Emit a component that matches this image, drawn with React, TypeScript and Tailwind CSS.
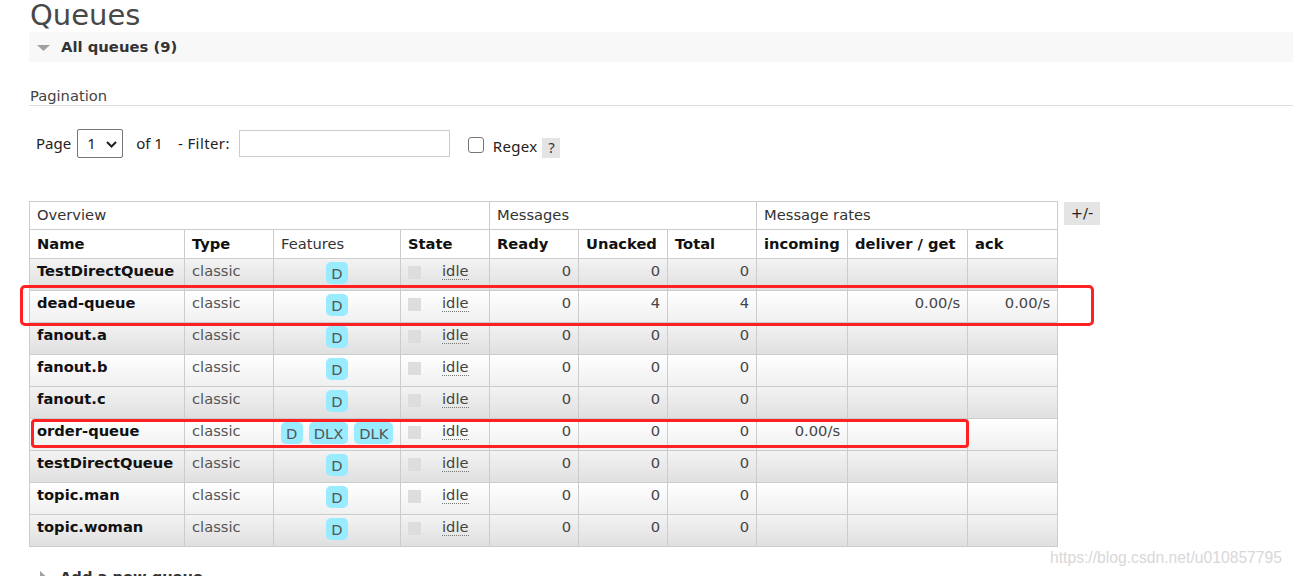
import React from "react";

type Row = {
  name: string;
  feats: string[];
  ready: string;
  unacked: string;
  total: string;
  incoming: string;
  deliver: string;
  ack: string;
};

const rows: Row[] = [
  { name: "TestDirectQueue", feats: ["D"], ready: "0", unacked: "0", total: "0", incoming: "", deliver: "", ack: "" },
  { name: "dead-queue", feats: ["D"], ready: "0", unacked: "4", total: "4", incoming: "", deliver: "0.00/s", ack: "0.00/s" },
  { name: "fanout.a", feats: ["D"], ready: "0", unacked: "0", total: "0", incoming: "", deliver: "", ack: "" },
  { name: "fanout.b", feats: ["D"], ready: "0", unacked: "0", total: "0", incoming: "", deliver: "", ack: "" },
  { name: "fanout.c", feats: ["D"], ready: "0", unacked: "0", total: "0", incoming: "", deliver: "", ack: "" },
  { name: "order-queue", feats: ["D", "DLX", "DLK"], ready: "0", unacked: "0", total: "0", incoming: "0.00/s", deliver: "", ack: "" },
  { name: "testDirectQueue", feats: ["D"], ready: "0", unacked: "0", total: "0", incoming: "", deliver: "", ack: "" },
  { name: "topic.man", feats: ["D"], ready: "0", unacked: "0", total: "0", incoming: "", deliver: "", ack: "" },
  { name: "topic.woman", feats: ["D"], ready: "0", unacked: "0", total: "0", incoming: "", deliver: "", ack: "" },
];

const V = { fontFamily: '"DejaVu Sans", Verdana, sans-serif' };
const S = { fontFamily: '"Noto Sans", "Open Sans", sans-serif' };

export default function App() {
  const td = "border border-[#cccccc] align-top px-[7px] pt-[3px] leading-[18px] h-[32px]";
  const num = td + " text-right text-[#444]";
  return (
    <div className="relative w-[1293px] h-[576px] overflow-hidden bg-white text-[#333]" style={V}>
      <div className="pl-[29px]">
        <h1 className="h-[32px] text-[29px] leading-[31px] pl-[1px] text-[#484848]">Queues</h1>
        <div className="h-[30px] bg-[#f8f8f8] flex items-center pl-[8px]">
          <svg width="13" height="6" viewBox="0 0 13 6" className="mr-[11px] mt-[1px]">
            <polygon points="0,0 13,0 6.5,6" fill="#a0a0a0" />
          </svg>
          <span className="font-bold text-[14.8px] text-[#333]">All queues (9)</span>
        </div>
        <div className="mt-[23px] h-[21px] leading-[21px] text-[14.7px] pl-[1px] border-b border-[#dddddd] text-[#444]">
          Pagination
        </div>
        <div className="mt-[23px] h-[29px] flex items-center text-[15px] text-[#222]" style={S}>
          <span className="ml-[7px]">Page</span>
          <div className="ml-[6px] w-[46px] h-[29px] border border-[#767676] rounded-[2px] flex items-center pl-[9px]">
            <span>1</span>
            <svg width="11" height="7" viewBox="0 0 11 7" className="ml-[10px] mt-[1px]">
              <polyline points="1,1 5.5,5.5 10,1" fill="none" stroke="#222" strokeWidth="2" />
            </svg>
          </div>
          <span className="ml-[13px]">of 1</span>
          <span className="ml-[15px] tracking-[0.4px]">- Filter:</span>
          <div className="ml-[9px] w-[211px] h-[27px] border border-[#cccccc]" />
          <div className="ml-[18px] w-[16px] h-[16px] border border-[#767676] rounded-[3px] mt-[2px]" />
          <span className="ml-[9px] mt-[6px] tracking-[0.3px]">Regex</span>
          <span className="ml-[5px] mt-[8px] w-[18px] h-[20px] bg-[#e4e4e4] flex items-center justify-center text-[#333]">?</span>
        </div>
        <div className="mt-[43px] flex items-start">
          <table className="border-collapse table-fixed w-[1028px] text-[14.7px]">
            <colgroup>
              <col className="w-[155px]" />
              <col className="w-[89px]" />
              <col className="w-[127px]" />
              <col className="w-[89px]" />
              <col className="w-[89px]" />
              <col className="w-[89px]" />
              <col className="w-[89px]" />
              <col className="w-[91px]" />
              <col className="w-[120px]" />
              <col className="w-[90px]" />
            </colgroup>
            <thead>
              <tr className="bg-white text-[#333]">
                <th colSpan={4} className="border border-[#cccccc] h-[28px] px-[7px] text-left font-normal">Overview</th>
                <th colSpan={3} className="border border-[#cccccc] h-[28px] px-[7px] text-left font-normal">Messages</th>
                <th colSpan={3} className="border border-[#cccccc] h-[28px] px-[7px] text-left font-normal">Message rates</th>
              </tr>
              <tr className="bg-white text-[#111]">
                <th className="border border-[#cccccc] h-[29px] px-[7px] text-left font-bold">Name</th>
                <th className="border border-[#cccccc] h-[29px] px-[7px] text-left font-bold">Type</th>
                <th className="border border-[#cccccc] h-[29px] px-[7px] text-left font-normal text-[#333]">Features</th>
                <th className="border border-[#cccccc] h-[29px] px-[7px] text-left font-bold">State</th>
                <th className="border border-[#cccccc] h-[29px] px-[7px] text-left font-bold">Ready</th>
                <th className="border border-[#cccccc] h-[29px] px-[7px] text-left font-bold">Unacked</th>
                <th className="border border-[#cccccc] h-[29px] px-[7px] text-left font-bold">Total</th>
                <th className="border border-[#cccccc] h-[29px] px-[7px] text-left font-bold">incoming</th>
                <th className="border border-[#cccccc] h-[29px] px-[7px] text-left font-bold">deliver / get</th>
                <th className="border border-[#cccccc] h-[29px] px-[7px] text-left font-bold">ack</th>
              </tr>
            </thead>
            <tbody>
              {rows.map((r, i) => (
                <tr
                  key={r.name}
                  className={
                    i % 2 === 0
                      ? "bg-linear-to-b from-[#f3f3f3] to-[#dfdfdf]"
                      : "bg-linear-to-b from-[#ffffff] to-[#efefef]"
                  }
                >
                  <td className={td + " font-bold text-[#111]"}>{r.name}</td>
                  <td className={td + " text-[#555]"}>classic</td>
                  <td className="border border-[#cccccc] align-top h-[32px] pt-[3px]">
                    <div className="flex justify-center gap-[6px]">
                      {r.feats.map((f) => (
                        <span
                          key={f}
                          className="h-[22px] px-[5px] min-w-[22px] rounded-[5px] bg-[#99ebff] text-[#555] leading-[24px] text-center"
                        >
                          {f}
                        </span>
                      ))}
                    </div>
                  </td>
                  <td className={td + " text-[#444]"}>
                    <div className="flex items-start">
                      <span className="w-[13px] h-[13px] bg-[#dddddd] mt-[4px]" />
                      <span className="ml-[21px] border-b border-dotted border-[#777] leading-[17px]">idle</span>
                    </div>
                  </td>
                  <td className={num}>{r.ready}</td>
                  <td className={num}>{r.unacked}</td>
                  <td className={num}>{r.total}</td>
                  <td className={num}>{r.incoming}</td>
                  <td className={num}>{r.deliver}</td>
                  <td className={num}>{r.ack}</td>
                </tr>
              ))}
            </tbody>
          </table>
          <div className="ml-[6px] mt-[1px] w-[36px] h-[23px] bg-[#e4e4e4] flex items-center justify-center text-[14.7px] text-[#222]">
            +/-
          </div>
        </div>
        <div className="mt-[19px] flex items-center pl-[11px]">
          <svg width="7" height="13" viewBox="0 0 7 13" className="mr-[13px]">
            <polygon points="0,0 7,6.5 0,13" fill="#a0a0a0" />
          </svg>
          <span className="font-bold text-[14.7px] text-[#333]">Add a new queue</span>
        </div>
      </div>

      <div className="absolute left-[20px] top-[285px] w-[1074px] h-[41px] border-[3px] border-[#ff2222] rounded-[5px]" />
      <div className="absolute left-[31px] top-[419px] w-[938px] h-[29px] border-[3px] border-[#ff2222] rounded-[4px]" />
      <div
        className="absolute left-[1050px] top-[546px] text-[15.7px] text-[#d8d8d8]"
        style={{ fontFamily: '"Liberation Sans", Arial, sans-serif' }}
      >
        https://blog.csdn.net/u010857795
      </div>
    </div>
  );
}
